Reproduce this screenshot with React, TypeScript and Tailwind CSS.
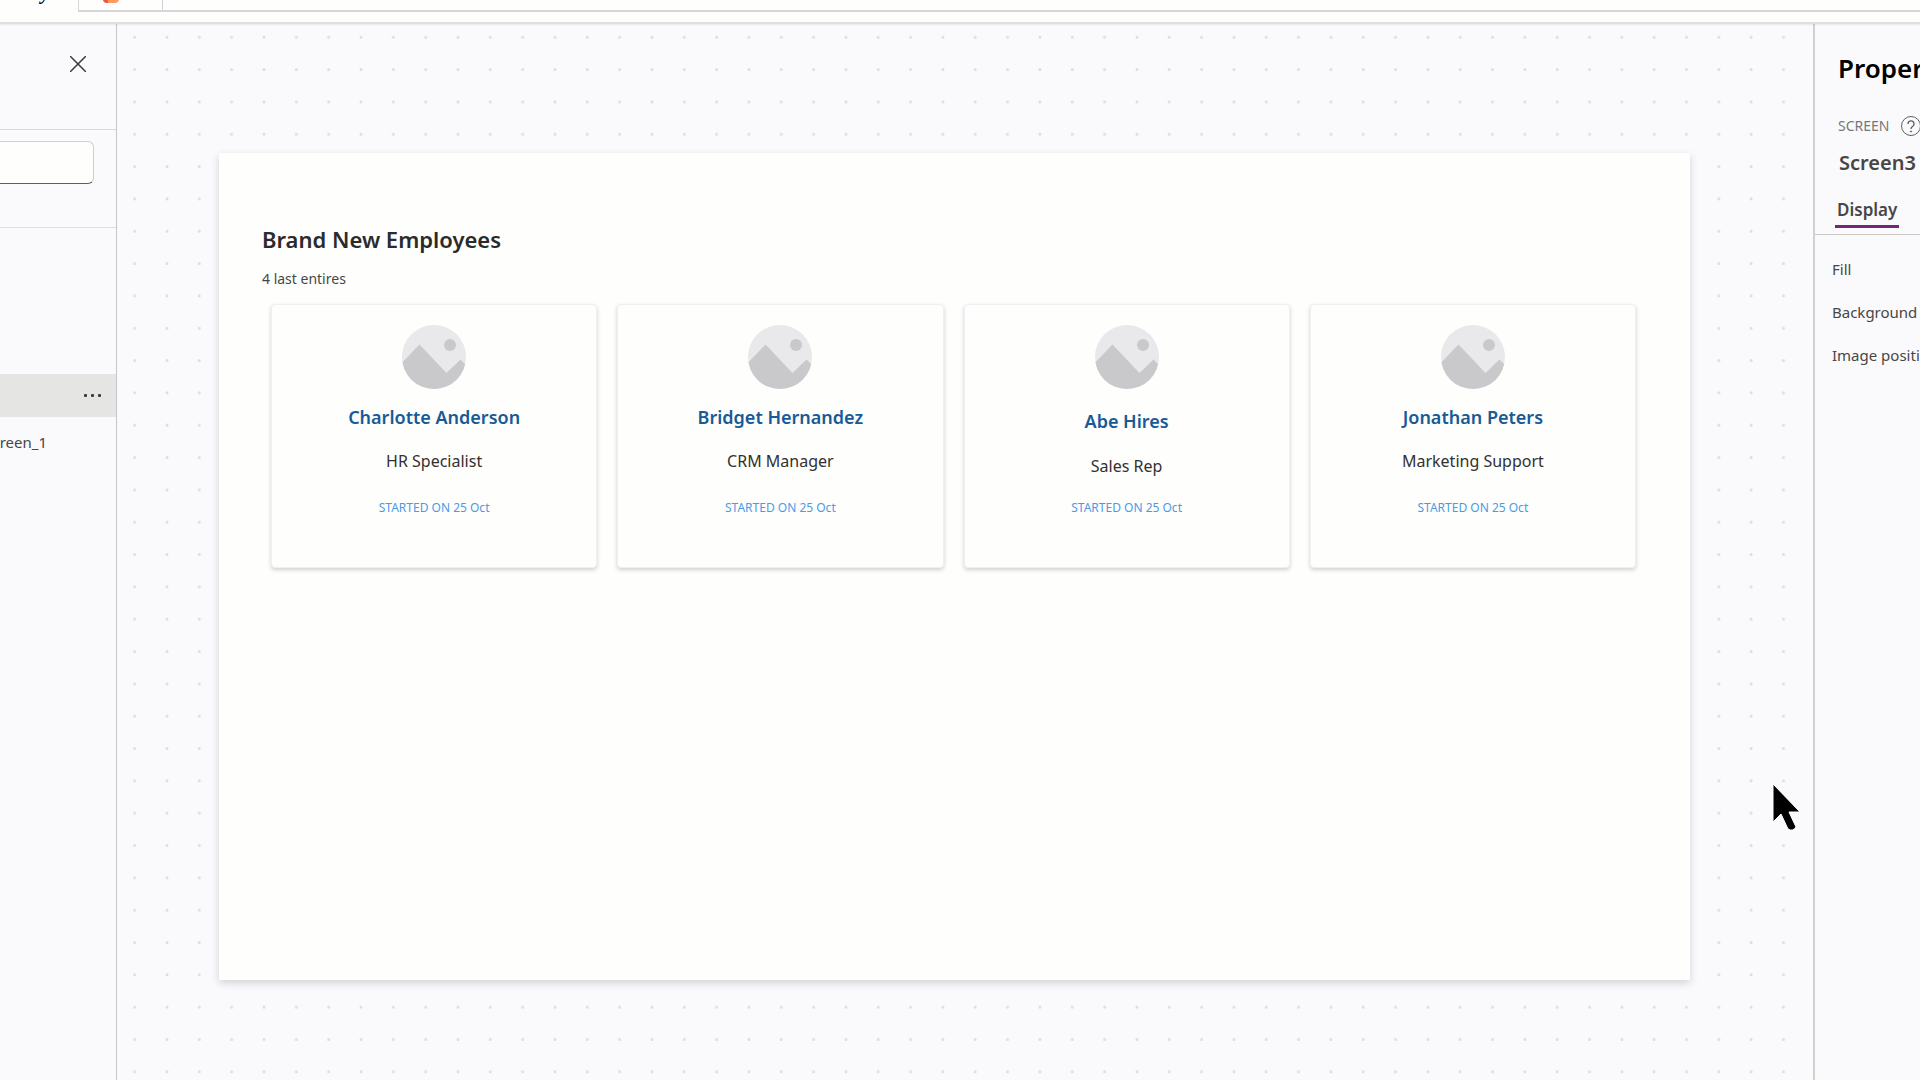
import { useId } from "react";

type Employee = { name: string; role: string; compact: boolean };

const employees: Employee[] = [
  { name: "Charlotte Anderson", role: "HR Specialist", compact: true },
  { name: "Bridget Hernandez", role: "CRM Manager", compact: true },
  { name: "Abe Hires", role: "Sales Rep", compact: false },
  { name: "Jonathan Peters", role: "Marketing Support", compact: true },
];

function Avatar() {
  const clip = useId();
  return (
    <svg viewBox="0 0 64 64" className="size-16" aria-hidden="true">
      <clipPath id={clip}>
        <circle cx="32" cy="32" r="32" />
      </clipPath>
      <g clipPath={`url(#${clip})`}>
        <rect width="64" height="64" fill="#e9e9eb" />
        <path d="M-4 42 17.500 19.500 44.500 48 58.500 34.500 68 44V64H-4Z" fill="#c9c9cb" />
        <circle cx="48" cy="20" r="6" fill="#c9c9cb" />
      </g>
    </svg>
  );
}

function EmployeeCard({ name, role, compact }: Employee) {
  return (
    <article className="flex h-[264px] min-w-0 flex-1 flex-col items-center rounded border border-[#f0f0f4] bg-[#fefefd] pt-5 text-center shadow-[0_2px_4px_rgba(0,0,0,0.18)]">
      <Avatar />
      <div className={compact ? "flex h-[111px] flex-col gap-5 pt-4" : "flex h-[111px] flex-col gap-[21px] pt-5"}>
        <h2 className="text-lg leading-6 font-semibold text-[#175a96]">{name}</h2>
        <p className="text-base leading-6 text-[#323130]">{role}</p>
      </div>
      <p className="text-xs leading-4 text-[#4a9ae8]">STARTED ON 25 Oct</p>
    </article>
  );
}

function DotGrid() {
  return (
    <svg className="absolute inset-0 size-full" aria-hidden="true">
      <defs>
        <pattern id="canvas-dots" width="97" height="97" patternUnits="userSpaceOnUse" patternTransform="translate(0 -3) scale(0.3333)">
          <rect x="49" y="45" width="8" height="8" rx="2" fill="#dcdcde" />
        </pattern>
      </defs>
      <rect width="100%" height="100%" fill="url(#canvas-dots)" />
    </svg>
  );
}

export default function App() {
  return (
    <div className="relative flex h-screen flex-col overflow-hidden bg-[#fafafd] font-['Noto_Sans','Open_Sans',sans-serif] text-[#484644]">
      <header className="relative z-10 flex h-6 shrink-0 items-start border-b-2 border-[#dfdfde] bg-[#fefefd] shadow-[0_1px_2px_rgba(0,0,0,0.08)]">
        <div className="flex h-3 w-[78px] shrink-0 items-end justify-end pr-7 pb-3">
          <span className="font-['Liberation_Serif',serif] text-xl leading-4 font-semibold text-black italic">y</span>
        </div>
        <div className="flex h-3 flex-1 border-b-2 border-l border-[#d5d5da]">
          <div className="flex w-[84px] border-r border-[#d0d0d8] pl-6">
            <svg width="16" height="4" viewBox="0 0 16 4" aria-hidden="true">
              <path d="M0 0H16Q15 3 12 3H4Q1 3 0 0Z" fill="#ff9a62" />
              <path d="M0 0H5V3H4Q1 3 0 0Z" fill="#f65340" />
            </svg>
          </div>
        </div>
      </header>

      <div className="flex min-h-0 flex-1">
        <aside className="flex w-[117px] shrink-0 flex-col border-r border-[#c6c6ca]">
          <div className="flex h-[106px] items-start justify-end border-b border-[#d9d9d9] pt-8 pr-[30px]">
            <button type="button" aria-label="Close" className="size-4">
              <svg viewBox="0 0 16 16" className="size-4" fill="none" stroke="#3b3a39" strokeWidth="1.500" aria-hidden="true">
                <path d="M0 0 16 16M16 0 0 16" />
              </svg>
            </button>
          </div>
          <div className="h-[98px] border-b border-[#dedede] pt-[11px] pr-[22px]">
            <input
              type="text"
              aria-label="Search"
              className="h-[43px] w-full rounded-r-md border border-l-0 border-[#cfcfcf] border-b-[#605e5c] bg-[#fefefd]"
            />
          </div>
          <div className="mt-[146px] flex h-[43px] items-center justify-end bg-[#e5e5e3] pr-3.5">
            <button type="button" aria-label="More options" className="w-[18px]">
              <svg viewBox="0 0 18 4" className="w-full" fill="#3b3a39" aria-hidden="true">
                <rect x="0" width="3" height="3" rx="1" />
                <rect x="7" width="3" height="3" rx="1" />
                <rect x="14" width="3" height="3" rx="1" />
              </svg>
            </button>
          </div>
          <div className="flex h-[51px] items-center justify-end pr-[69px] text-[15px] whitespace-nowrap">reen_1</div>
        </aside>

        <main className="relative min-w-0 flex-1 pt-[129px] pr-[123px] pb-[100px] pl-[102px]">
          <DotGrid />
          <section className="relative h-full bg-[#fefefd] px-[43px] pt-[70px] shadow-[0_3px_8px_rgba(0,0,0,0.16)]">
            <h1 className="text-[22px] leading-8 font-semibold text-[#2b2b2b]">Brand New Employees</h1>
            <p className="pt-3.5 text-sm leading-5">4 last entires</p>
            <div className="flex gap-5 pt-[15px] pr-[11px] pl-[9px]">
              {employees.map((e) => (
                <EmployeeCard key={e.name} {...e} />
              ))}
            </div>
          </section>
        </main>

        <aside className="flex w-[107px] shrink-0 flex-col overflow-hidden border-l-2 border-[#d0d0d0] whitespace-nowrap">
          <h2 className="pt-6 pl-[23px] text-[26px] leading-10 font-semibold text-black">Properties</h2>
          <div className="flex items-center gap-3 pt-7 pl-[23px]">
            <span className="text-sm leading-5 text-[#797775]">SCREEN</span>
            <svg viewBox="0 0 20 20" className="size-5 shrink-0" fill="none" stroke="#605e5c" aria-hidden="true">
              <circle cx="10" cy="10" r="9.500" />
              <path d="M7 8a3 3 0 1 1 4.500 2.500Q10 11.500 10 13" strokeWidth="1.300" />
              <circle cx="10" cy="15.500" r=".6" fill="#605e5c" />
            </svg>
          </div>
          <p className="pt-[15px] pl-6 text-xl leading-6 font-semibold">Screen3</p>
          <div role="tablist" className="flex border-b border-[#cbc9c3] pt-[19px] pb-1.5 pl-5">
            <button type="button" role="tab" aria-selected="true" className="h-[34px] border-b-[3px] border-[#742774] px-0.5 text-[17px] leading-6 font-semibold">
              Display
            </button>
          </div>
          <ul className="pt-[13px] pl-[17px] text-[15px]">
            <li className="flex h-[43px] items-center">Fill</li>
            <li className="flex h-[43px] items-center">Background</li>
            <li className="flex h-[43px] items-center">Image position</li>
          </ul>
        </aside>
      </div>

      <svg viewBox="0 0 32 50" className="absolute right-[118px] bottom-[248px] h-[50px] w-8" aria-hidden="true">
        <path d="M3 2V40L11 32L18 47Q23 50 26 45L19 30H30Z" fill="#000" stroke="#fff" strokeWidth="1" />
      </svg>
    </div>
  );
}
